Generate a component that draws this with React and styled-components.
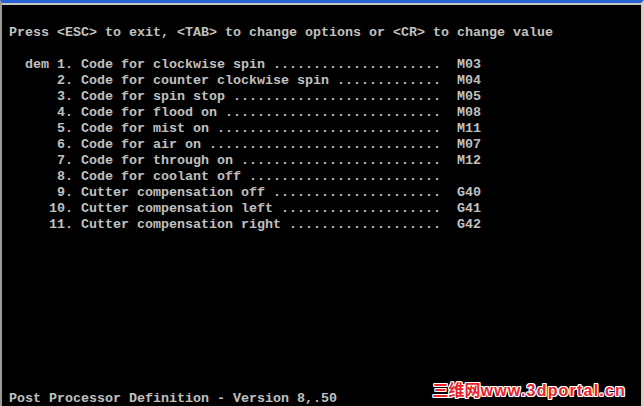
import React from 'react'
import styled, { createGlobalStyle } from 'styled-components'

const GlobalStyle = createGlobalStyle`
  html, body {
    margin: 0;
    padding: 0;
    background: #000;
    overflow: hidden;
  }
`

const Frame = styled.div`
  position: relative;
  height: 406px;
  box-sizing: border-box;
  border-top: 3px solid #2a63d6;
  border-left: 2px solid #9c9a94;
  border-right: 3px solid #d4d0c8;
  background: #000;
  display: flex;
  flex-direction: column;
`

const TopEdge = styled.div`
  height: 2px;
  background: #c9c7c1;
`

const Screen = styled.div`
  flex: 1;
  display: flex;
  flex-direction: column;
  padding: 19px 0 0 7px;
  font-family: 'Liberation Mono', 'DejaVu Sans Mono', monospace;
  font-size: 13.333px;
  font-weight: bold;
  line-height: 16px;
  color: #c0c0c0;
`

const Line = styled.div`
  height: 16px;
  white-space: pre;
  padding-top: 1px;
  box-sizing: border-box;
`

const Footer = styled(Line)`
  margin-top: auto;
`

const Watermark = styled.div`
  position: absolute;
  right: 15px;
  bottom: 5px;
  display: flex;
  align-items: baseline;
  color: #e8232b;
  font-weight: bold;
  font-size: 16px;
  text-shadow:
    1px 0 0 #fff, -1px 0 0 #fff, 0 1px 0 #fff, 0 -1px 0 #fff,
    1px 1px 0 #fff, -1px -1px 0 #fff, 1px -1px 0 #fff, -1px 1px 0 #fff;
`

const WatermarkCjk = styled.span`
  font-family: 'Noto Sans CJK SC', sans-serif;
  font-size: 16px;
`

const WatermarkUrl = styled.span`
  font-family: 'Liberation Sans', Arial, sans-serif;
  letter-spacing: 1.2px;
`

const items = [
  { prefix: 'dem', n: '1', label: 'Code for clockwise spin', value: 'M03' },
  { n: '2', label: 'Code for counter clockwise spin', value: 'M04' },
  { n: '3', label: 'Code for spin stop', value: 'M05' },
  { n: '4', label: 'Code for flood on', value: 'M08' },
  { n: '5', label: 'Code for mist on', value: 'M11' },
  { n: '6', label: 'Code for air on', value: 'M07' },
  { n: '7', label: 'Code for through on', value: 'M12' },
  { n: '8', label: 'Code for coolant off', value: '' },
  { n: '9', label: 'Cutter compensation off', value: 'G40' },
  { n: '10', label: 'Cutter compensation left', value: 'G41' },
  { n: '11', label: 'Cutter compensation right', value: 'G42' }
]

// dots run up to column 53, value sits at column 56
const formatItem = (item) => {
  const head =
    '  ' + (item.prefix || '').padEnd(3) + item.n.padStart(2) + '. ' + item.label + ' '
  const dots = '.'.repeat(Math.max(0, 54 - head.length))
  return head + dots + (item.value ? '  ' + item.value : '')
}

function App() {
  return (
    <>
      <GlobalStyle />
      <Frame>
        <TopEdge />
        <Screen>
          <Line>
            Press &lt;ESC&gt; to exit, &lt;TAB&gt; to change options or &lt;CR&gt; to change value
          </Line>
          <Line />
          {items.map((item) => (
            <Line key={item.n}>{formatItem(item)}</Line>
          ))}
          <Footer>Post Processor Definition - Version 8,.50</Footer>
        </Screen>
        <Watermark>
          <WatermarkCjk>三维网</WatermarkCjk>
          <WatermarkUrl>www.3dportal.cn</WatermarkUrl>
        </Watermark>
      </Frame>
    </>
  )
}

export default App
